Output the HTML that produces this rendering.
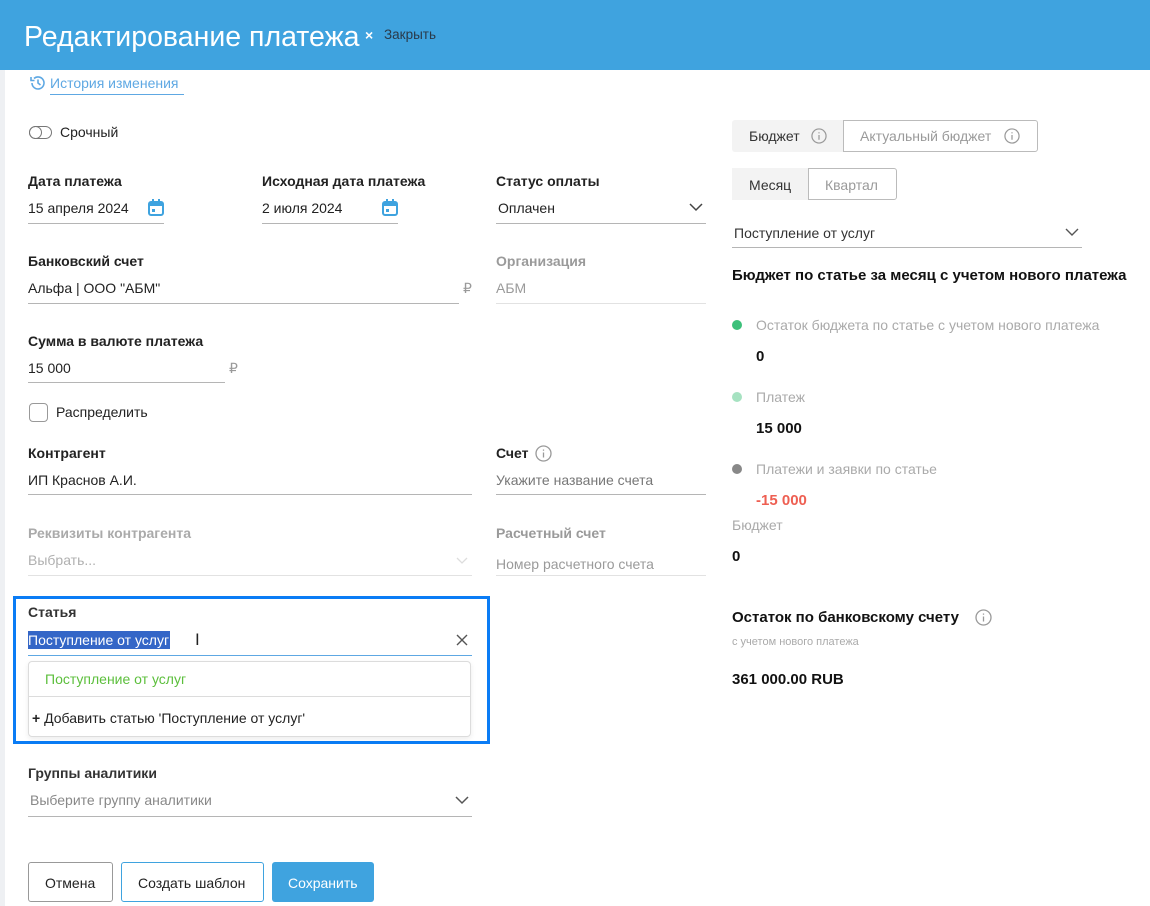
<!DOCTYPE html>
<html><head><meta charset="utf-8"><style>
*{margin:0;padding:0;box-sizing:border-box}
body{width:1150px;height:906px;overflow:hidden;background:#fff;font-family:"Liberation Sans",sans-serif;font-size:14px;color:#222;position:relative}
.t{position:absolute;white-space:nowrap;line-height:16px}
.b{font-weight:bold}
.g{color:#9a9a9a}
.ln{position:absolute;height:1px;background:#b5b5b5}
.lnl{position:absolute;height:1px;background:#e2e2e2}
svg{position:absolute}
</style></head><body>
<div style="position:absolute;left:0;top:70px;width:5px;height:836px;background:#eef0f3"></div>
<div style="position:absolute;left:0;top:0;width:1150px;height:70px;background:#3fa3df"></div>
<div class="t" style="left:24px;top:20px;font-size:28.5px;line-height:34px;color:#fff">Редактирование платежа</div>
<div class="t" style="left:365px;top:27px;color:#fff;font-size:14px;font-weight:bold">×</div>
<div class="t" style="left:384px;top:27px;color:#2a3a4a;font-size:13.5px">Закрыть</div>

<svg style="left:29px;top:74px" width="18" height="18" viewBox="0 0 18 18" fill="none" stroke="#5ea8e3" stroke-width="1.6"><path d="M3 9a6 6 0 1 0 2-4.5"/><path d="M2 3v3.5h3.5"/><path d="M9 5.5V9l2.5 2"/></svg>
<div class="t" style="left:50px;top:75px;color:#5ea8e3">История изменения</div>
<div style="position:absolute;left:50px;top:94px;width:134px;height:1px;background:#5ea8e3"></div>

<div style="position:absolute;left:29px;top:126px;width:23px;height:13px;border:1.5px solid #777;border-radius:7px"></div>
<div style="position:absolute;left:29px;top:126px;width:13px;height:13px;border:1.5px solid #777;border-radius:50%"></div>
<div class="t" style="left:60px;top:124px">Срочный</div>

<div class="t b" style="left:28px;top:173px">Дата платежа</div>
<div class="t" style="left:28px;top:200px">15 апреля 2024</div>
<svg style="left:148px;top:199px" width="16" height="17" viewBox="0 0 16 17"><rect x="1" y="3" width="14" height="13" rx="2" fill="none" stroke="#3fa3df" stroke-width="2"/><rect x="1" y="3" width="14" height="4" fill="#3fa3df"/><rect x="4" y="0" width="2" height="4" fill="#3fa3df"/><rect x="10" y="0" width="2" height="4" fill="#3fa3df"/><rect x="4" y="10" width="3" height="3" fill="#3fa3df"/></svg>
<div class="ln" style="left:28px;top:223px;width:136px"></div>
<div class="t b" style="left:262px;top:173px">Исходная дата платежа</div>
<div class="t" style="left:262px;top:200px">2 июля 2024</div>
<svg style="left:382px;top:199px" width="16" height="17" viewBox="0 0 16 17"><rect x="1" y="3" width="14" height="13" rx="2" fill="none" stroke="#3fa3df" stroke-width="2"/><rect x="1" y="3" width="14" height="4" fill="#3fa3df"/><rect x="4" y="0" width="2" height="4" fill="#3fa3df"/><rect x="10" y="0" width="2" height="4" fill="#3fa3df"/><rect x="4" y="10" width="3" height="3" fill="#3fa3df"/></svg>
<div class="ln" style="left:262px;top:223px;width:136px"></div>
<div class="t b" style="left:496px;top:173px">Статус оплаты</div>
<div class="t" style="left:498px;top:200px">Оплачен</div>
<svg style="left:689px;top:203px" width="14" height="9" viewBox="0 0 14 9"><path d="M1 1l6 6 6-6" fill="none" stroke="#444" stroke-width="1.5"/></svg>
<div class="ln" style="left:496px;top:223px;width:210px"></div>

<div class="t b" style="left:28px;top:253px">Банковский счет</div>
<div class="t" style="left:28px;top:280px">Альфа | ООО "АБМ"</div>
<div class="t g" style="left:463px;top:280px">₽</div>
<div class="ln" style="left:28px;top:303px;width:431px"></div>
<div class="t b g" style="left:496px;top:253px">Организация</div>
<div class="t g" style="left:496px;top:280px">АБМ</div>
<div class="lnl" style="left:496px;top:303px;width:210px"></div>

<div class="t b" style="left:28px;top:333px">Сумма в валюте платежа</div>
<div class="t" style="left:28px;top:360px">15 000</div>
<div class="t g" style="left:229px;top:360px">₽</div>
<div class="ln" style="left:28px;top:382px;width:197px"></div>

<div style="position:absolute;left:29px;top:403px;width:19px;height:19px;border:1.5px solid #999;border-radius:4px"></div>
<div class="t" style="left:56px;top:404px">Распределить</div>

<div class="t b" style="left:28px;top:445px">Контрагент</div>
<div class="t" style="left:28px;top:472px">ИП Краснов А.И.</div>
<div class="ln" style="left:28px;top:494px;width:444px"></div>
<div class="t b" style="left:496px;top:445px">Счет</div>
<svg style="left:535px;top:445px" width="17" height="17" viewBox="0 0 17 17" fill="none" stroke="#999" stroke-width="1.3"><circle cx="8.5" cy="8.5" r="7.5"/><path d="M8.5 7.5v5M8.5 4.5v1.2"/></svg>
<div class="t g" style="left:496px;top:472px;color:#777">Укажите название счета</div>
<div class="ln" style="left:496px;top:494px;width:210px"></div>

<div class="t b g" style="left:28px;top:525px;color:#aaa">Реквизиты контрагента</div>
<div class="t g" style="left:28px;top:552px;color:#b0b0b0">Выбрать...</div>
<svg style="left:456px;top:557px" width="12" height="8" viewBox="0 0 12 8"><path d="M1 1l5 5 5-5" fill="none" stroke="#ddd" stroke-width="1.3"/></svg>
<div class="lnl" style="left:28px;top:575px;width:444px"></div>
<div class="t b g" style="left:496px;top:525px">Расчетный счет</div>
<div class="t g" style="left:496px;top:556px">Номер расчетного счета</div>
<div class="lnl" style="left:496px;top:575px;width:210px"></div>

<div style="position:absolute;left:13px;top:596px;width:477px;height:148px;border:3px solid #0a7cf5"></div>
<div class="t b" style="left:28px;top:604px;color:#333">Статья</div>
<div style="position:absolute;left:28px;top:631px;width:142px;height:18px;background:#3466c7"></div>
<div class="t" style="left:28px;top:632px;color:#fff">Поступление от услуг</div>
<div class="t" style="left:195px;top:632px;font-size:17px">I</div>
<svg style="left:456px;top:634px" width="12" height="12" viewBox="0 0 12 12"><path d="M1 1l10 10M11 1L1 11" stroke="#555" stroke-width="1.4"/></svg>
<div style="position:absolute;left:28px;top:655px;width:444px;height:1px;background:#5ea8e3"></div>
<div style="position:absolute;left:28px;top:661px;width:443px;height:76px;border:1px solid #dcdcdc;border-radius:4px;box-shadow:0 2px 6px rgba(0,0,0,.08)"></div>
<div style="position:absolute;left:29px;top:696px;width:441px;height:1px;background:#dcdcdc"></div>
<div class="t" style="left:45px;top:671px;color:#5cbf3c">Поступление от услуг</div>
<div class="t b" style="left:32px;top:710px">+ <span style="font-weight:normal">Добавить статью 'Поступление от услуг'</span></div>

<div class="t b" style="left:28px;top:765px;color:#333">Группы аналитики</div>
<div class="t" style="left:30px;top:792px;color:#888">Выберите группу аналитики</div>
<svg style="left:455px;top:796px" width="14" height="9" viewBox="0 0 14 9"><path d="M1 1l6 6 6-6" fill="none" stroke="#555" stroke-width="1.5"/></svg>
<div class="ln" style="left:28px;top:816px;width:444px"></div>

<div style="position:absolute;left:28px;top:862px;width:85px;height:40px;border:1px solid #999;border-radius:3px"></div>
<div class="t" style="left:45px;top:875px">Отмена</div>
<div style="position:absolute;left:121px;top:862px;width:143px;height:40px;border:1px solid #3fa3df;border-radius:3px"></div>
<div class="t" style="left:138px;top:875px">Создать шаблон</div>
<div style="position:absolute;left:272px;top:862px;width:102px;height:40px;background:#3fa3df;border-radius:3px"></div>
<div class="t" style="left:288px;top:875px;color:#fff">Сохранить</div>

<div style="position:absolute;left:732px;top:120px;width:112px;height:32px;background:#f3f3f3;border-radius:3px 0 0 3px"></div>
<div class="t" style="left:749px;top:128px;color:#333">Бюджет</div>
<svg style="left:811px;top:128px" width="16" height="16" viewBox="0 0 17 17" fill="none" stroke="#999" stroke-width="1.3"><circle cx="8.5" cy="8.5" r="7.5"/><path d="M8.5 7.5v5M8.5 4.5v1.2"/></svg>
<div style="position:absolute;left:843px;top:120px;width:195px;height:32px;border:1px solid #bbb;border-radius:0 3px 3px 0"></div>
<div class="t g" style="left:860px;top:128px">Актуальный бюджет</div>
<svg style="left:1004px;top:128px" width="16" height="16" viewBox="0 0 17 17" fill="none" stroke="#999" stroke-width="1.3"><circle cx="8.5" cy="8.5" r="7.5"/><path d="M8.5 7.5v5M8.5 4.5v1.2"/></svg>

<div style="position:absolute;left:732px;top:168px;width:77px;height:32px;background:#f3f3f3"></div>
<div class="t" style="left:749px;top:177px;color:#333">Месяц</div>
<div style="position:absolute;left:808px;top:168px;width:89px;height:32px;border:1px solid #bbb;border-radius:0 3px 3px 0"></div>
<div class="t g" style="left:825px;top:177px">Квартал</div>

<div class="t" style="left:734px;top:225px;color:#333">Поступление от услуг</div>
<svg style="left:1065px;top:228px" width="14" height="9" viewBox="0 0 14 9"><path d="M1 1l6 6 6-6" fill="none" stroke="#555" stroke-width="1.4"/></svg>
<div class="ln" style="left:732px;top:247px;width:350px"></div>

<div class="t b" style="left:732px;top:268px;font-size:15px;color:#111">Бюджет по статье за месяц с учетом нового платежа</div>

<div style="position:absolute;left:732px;top:320px;width:10px;height:10px;border-radius:50%;background:#3cc07a"></div>
<div class="t g" style="left:756px;top:317px;color:#aaa">Остаток бюджета по статье с учетом нового платежа</div>
<div class="t b" style="left:756px;top:349px;font-size:15px;color:#111">0</div>
<div style="position:absolute;left:732px;top:392px;width:10px;height:10px;border-radius:50%;background:#a6e2c1"></div>
<div class="t g" style="left:756px;top:389px;color:#aaa">Платеж</div>
<div class="t b" style="left:756px;top:421px;font-size:15px;color:#111">15 000</div>
<div style="position:absolute;left:732px;top:464px;width:10px;height:10px;border-radius:50%;background:#888"></div>
<div class="t g" style="left:756px;top:461px;color:#aaa">Платежи и заявки по статье</div>
<div class="t b" style="left:756px;top:493px;font-size:15px;color:#ee5f52">-15 000</div>
<div class="t g" style="left:732px;top:517px;color:#aaa">Бюджет</div>
<div class="t b" style="left:732px;top:549px;font-size:15px;color:#111">0</div>

<div class="t b" style="left:732px;top:610px;font-size:15px;color:#111">Остаток по банковскому счету</div>
<svg style="left:975px;top:609px" width="17" height="17" viewBox="0 0 17 17" fill="none" stroke="#999" stroke-width="1.3"><circle cx="8.5" cy="8.5" r="7.5"/><path d="M8.5 7.5v5M8.5 4.5v1.2"/></svg>
<div class="t g" style="left:732px;top:634px;font-size:11px;color:#aaa">с учетом нового платежа</div>
<div class="t b" style="left:732px;top:672px;font-size:15px;color:#111">361 000.00 RUB</div>
</body></html>
